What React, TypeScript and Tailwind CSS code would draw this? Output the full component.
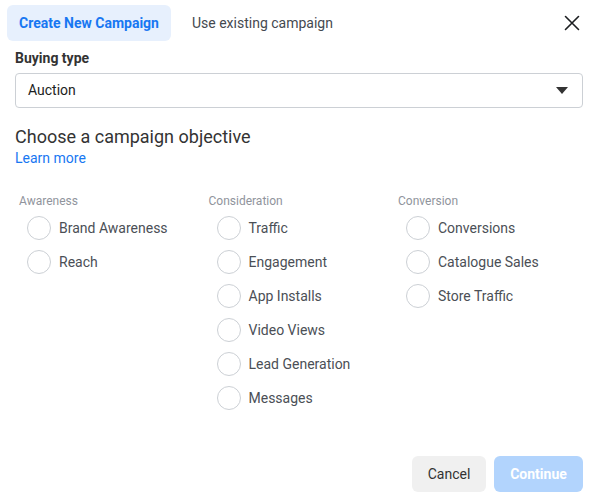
import React from "react";

const columns = [
  { title: "Awareness", items: ["Brand Awareness", "Reach"] },
  {
    title: "Consideration",
    items: ["Traffic", "Engagement", "App Installs", "Video Views", "Lead Generation", "Messages"],
  },
  { title: "Conversion", items: ["Conversions", "Catalogue Sales", "Store Traffic"] },
];

export default function App() {
  return (
    <div className="w-[596px] h-[497px] bg-white relative" style={{ fontFamily: "Roboto, 'Liberation Sans', sans-serif" }}>
      <div className="flex items-center pt-[5px] pl-[7px] pr-[12px]">
        <div className="h-[36px] w-[164px] rounded-[6px] bg-[#e7f0fd] flex items-center justify-center text-[14px] font-bold text-[#1877f2]">
          Create New Campaign
        </div>
        <div className="ml-[21px] text-[14px] text-[#444950]">Use existing campaign</div>
        <div className="ml-auto w-[24px] h-[24px] flex items-center justify-center">
          <svg width="16" height="16" viewBox="0 0 16 16">
            <path d="M1.5 1.5 L14.5 14.5 M14.5 1.5 L1.5 14.5" stroke="#1c1e21" strokeWidth="1.6" strokeLinecap="round" />
          </svg>
        </div>
      </div>
      <div className="pl-[15px] pr-[13px]">
        <div className="mt-[9px] text-[14px] font-bold text-[#333] leading-[17px]">Buying type</div>
        <div className="mt-[6px] h-[35px] border border-[#ccd0d5] rounded-[4px] flex items-center pl-[12px] pr-[14px]">
          <span className="text-[14px] text-[#1c1e21]">Auction</span>
          <svg className="ml-auto" width="12" height="7" viewBox="0 0 12 7">
            <path d="M0 0 H12 L6 7 Z" fill="#333" />
          </svg>
        </div>
        <div className="mt-[18px] text-[18px] leading-[22px] text-[#333]">Choose a campaign objective</div>
        <div className="mt-[2px] text-[14px] leading-[17px] text-[#1877f2]">Learn more</div>
        <div className="mt-[26px] flex pl-[4px]">
          {columns.map((col) => (
            <div key={col.title} className="w-[189.5px] shrink-0">
              <div className="text-[12px] leading-[16px] text-[#90949c]">{col.title}</div>
              <div className="mt-[2px] flex flex-col">
                {col.items.map((it) => (
                  <div key={it} className="h-[34px] flex items-center pl-[8px]">
                    <div className="w-[24px] h-[24px] rounded-full border border-[#ccd0d5] bg-white" />
                    <span className="ml-[8px] text-[14px] text-[#4b4f56]">{it}</span>
                  </div>
                ))}
              </div>
            </div>
          ))}
        </div>
      </div>
      <div className="absolute bottom-[5px] right-[13px] flex gap-[8px]">
        <div className="h-[36px] w-[74px] rounded-[6px] bg-[#f0f0f0] flex items-center justify-center text-[14px] text-[#333]">Cancel</div>
        <div className="h-[36px] w-[89px] rounded-[6px] bg-[#b2d4fd] flex items-center justify-center text-[14px] font-bold text-white">Continue</div>
      </div>
    </div>
  );
}
